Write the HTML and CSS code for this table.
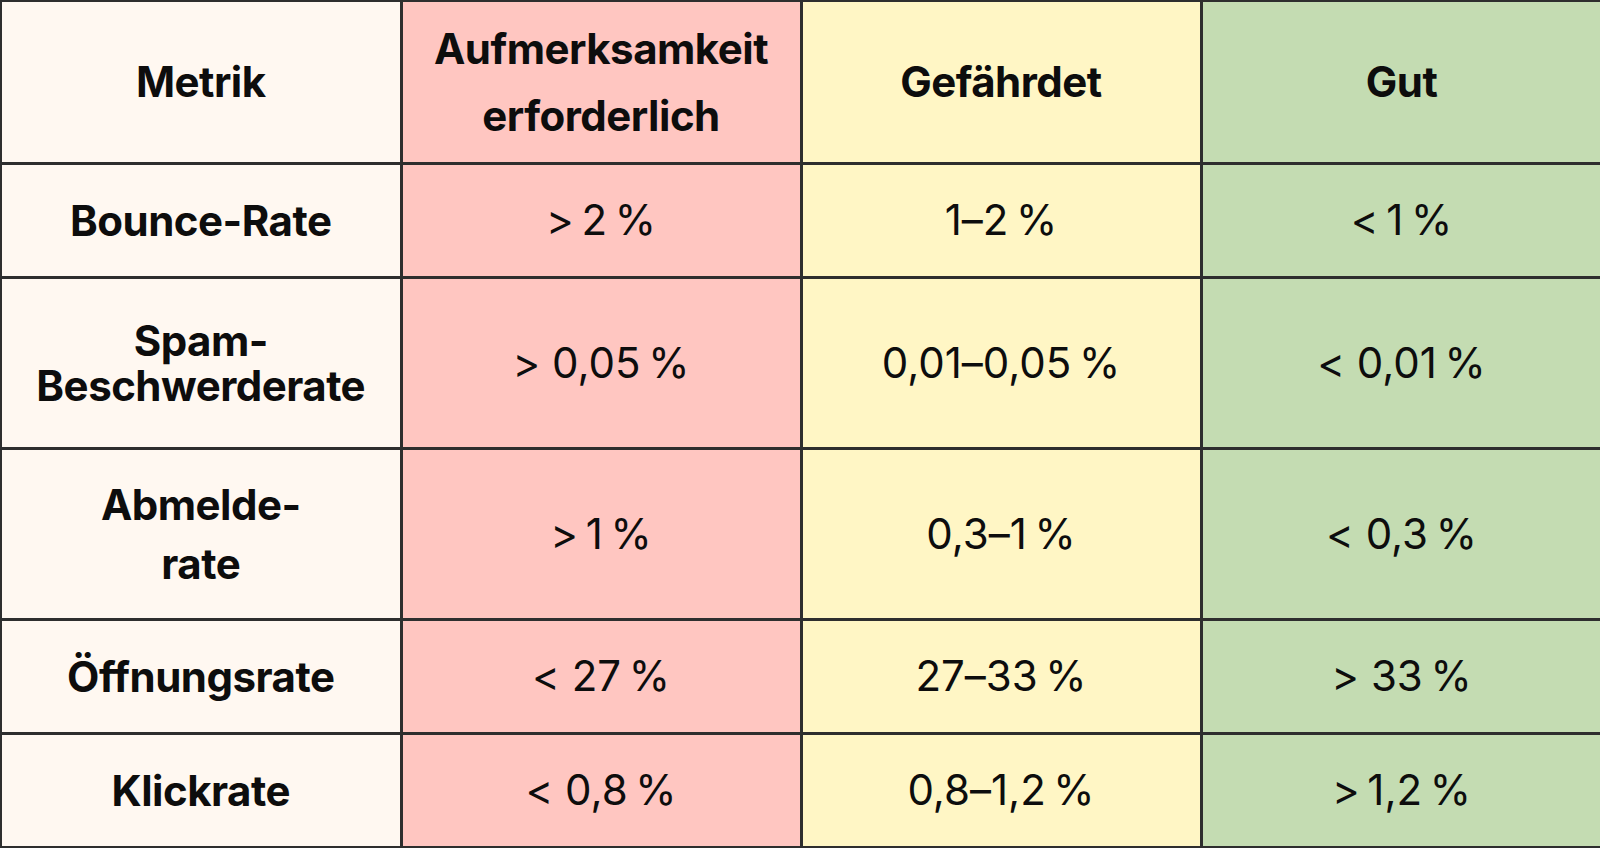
FILE: index.html
```html
<!DOCTYPE html>
<html lang="de">
<head>
<meta charset="utf-8">
<title>Metriken</title>
<link rel="stylesheet" href="styles.css">
</head>
<body>
<table class="metrics">
  <colgroup>
    <col class="c-metric"><col class="c-bad"><col class="c-risk"><col class="c-good">
  </colgroup>
  <thead>
    <tr class="r-head">
      <th class="metric">Metrik</th>
      <th class="bad">Aufmerksamkeit<br>erforderlich</th>
      <th class="risk">Gefährdet</th>
      <th class="good">Gut</th>
    </tr>
  </thead>
  <tbody>
    <tr class="r-short">
      <th class="metric">Bounce-Rate</th>
      <td class="bad">&gt;&#8239;2&#8239;%</td>
      <td class="risk">1–2&#8239;%</td>
      <td class="good">&lt;&#8239;1&#8239;%</td>
    </tr>
    <tr class="r-tall">
      <th class="metric tight">Spam-<br>Beschwerderate</th>
      <td class="bad">&gt; 0,05&#8239;%</td>
      <td class="risk">0,01–0,05&#8239;%</td>
      <td class="good">&lt; 0,01&#8239;%</td>
    </tr>
    <tr class="r-tall">
      <th class="metric loose">Abmelde-<br>rate</th>
      <td class="bad">&gt;&#8239;1&#8239;%</td>
      <td class="risk">0,3–1&#8239;%</td>
      <td class="good">&lt; 0,3&#8239;%</td>
    </tr>
    <tr class="r-short">
      <th class="metric">Öffnungsrate</th>
      <td class="bad">&lt; 27&#8239;%</td>
      <td class="risk">27–33&#8239;%</td>
      <td class="good">&gt; 33&#8239;%</td>
    </tr>
    <tr class="r-short">
      <th class="metric">Klickrate</th>
      <td class="bad">&lt; 0,8&#8239;%</td>
      <td class="risk">0,8–1,2&#8239;%</td>
      <td class="good">&gt;&#8239;1,2&#8239;%</td>
    </tr>
  </tbody>
</table>
</body>
</html>
```
FILE: styles.css
```css
html, body {
  margin: 0;
  padding: 0;
  background: #ffffff;
}

.metrics {
  width: 1600px;
  border-collapse: collapse;
  table-layout: fixed;
  font-family: Inter, "Liberation Sans", sans-serif;
  color: #0d0d0d;
}

.metrics col { width: 400px; }

.metrics th,
.metrics td {
  border: 3px solid #2e2e2e;
  text-align: center;
  vertical-align: middle;
  padding: 0;
  font-size: 42px;
  letter-spacing: -0.5px;
}

.metrics th {
  font-weight: 700;
  line-height: 67px;
}

.metrics td {
  font-weight: 400;
  line-height: 48px;
}

.metrics th.tight { line-height: 45px; }
.metrics th.loose { line-height: 59px; }

.metrics tr > :first-child { border-left-width: 2px; }
.metrics tr > :last-child { border-right: 1px solid #e4eddc; }
.metrics thead th { border-top-width: 2px; }

.r-head { height: 162px; }
.r-short { height: 114px; }
.r-tall { height: 171px; }

.metric { background: #fff8f1; }
.bad { background: #ffc6c1; }
.risk { background: #fff6c5; }
.good { background: #c4dcb2; }
```
